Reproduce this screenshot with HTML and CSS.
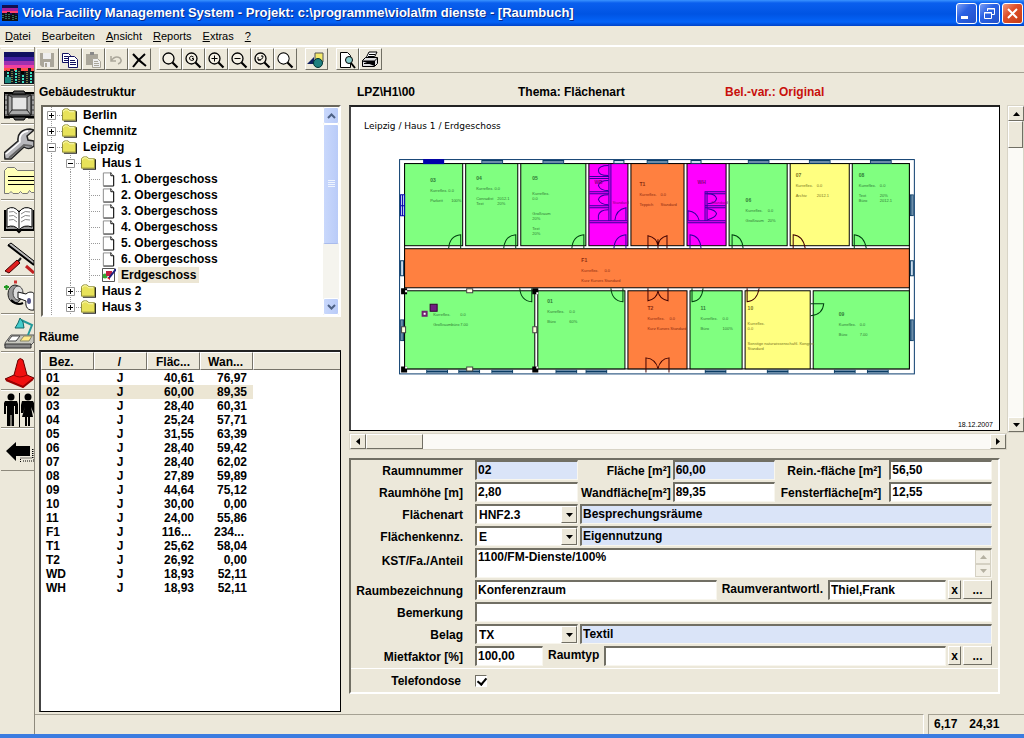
FILE: index.html
```html
<!DOCTYPE html>
<html lang="de">
<head>
  <meta charset="UTF-8">
  <meta name="viewport" content="width=device-width, initial-scale=1.0">
  <title>Viola Facility Management System</title>
  <link rel="stylesheet" href="styles.css">
</head>
<body>
  <svg class="defs" width="0" height="0" aria-hidden="true">
    <symbol id="folder" viewBox="0 0 16 14">
      <path d="M2 13.5h13.5V3" fill="none" stroke="#222" stroke-width="1.5"/>
      <path d="M.5 12.5v-10l2-2h4l2 2h6v10z" fill="#e8e25a" stroke="#8a8732"/>
      <path d="M1.5 4v-1l1.500-1.500h3l2 2h5" fill="none" stroke="#ffffc0"/>
    </symbol>
    <symbol id="page" viewBox="0 0 16 16">
      <path d="M2.500 15V1.500h8l3 3V15" fill="#fff" stroke="#888"/>
      <path d="M10.500 1v3.500h3V15.500h-11" fill="none" stroke="#000"/>
    </symbol>
    <symbol id="plus" viewBox="0 0 9 9">
      <path d="M.5.5h8v8h-8z" fill="#fff" stroke="#999"/>
      <path d="M2 4.500h5M4.500 2v5" stroke="#000"/>
    </symbol>
    <symbol id="minus" viewBox="0 0 9 9">
      <path d="M.5.5h8v8h-8z" fill="#fff" stroke="#999"/>
      <path d="M2 4.500h5" stroke="#000"/>
    </symbol>
    <symbol id="lens" viewBox="0 0 18 18">
      <circle cx="7.500" cy="7.500" r="5.500" fill="#f4f0e4" stroke="#000" stroke-width="1.300"/>
      <path d="M11.500 11.500l5 5" stroke="#000" stroke-width="2.200"/>
    </symbol>
    <symbol id="down" viewBox="0 0 7 4"><path d="M0 0h7L3.500 4z"/></symbol>
    <symbol id="up" viewBox="0 0 7 4"><path d="M0 4h7L3.500 0z"/></symbol>
    <!-- windows of the floor plan -->
    <symbol id="win-h" viewBox="0 0 22 4"><path d="M.5.5h21v3h-21zM0 2h22" fill="#cde" stroke="#0a3c64"/></symbol>
    <symbol id="win-v" viewBox="0 0 4 22"><path d="M.5.5h3v21h-3zM2 0v22" fill="#cde" stroke="#0a3c64"/></symbol>
  </svg>

  <header class="titlebar">
    <svg class="app-icon" width="16" height="16" viewBox="0 0 16 16">
      <path d="M0 0h16v16H0z" fill="#101050"/><path d="M0 3h16v3H0z" fill="#a020a0"/><path d="M0 6h16v2H0z" fill="#ff4070"/>
      <path d="M0 8h3v1h2v-2h3v3h2V8h3v2h3v6H0z" fill="#111"/><path d="M1 10v4M4 9v5M7 9v6M11 10v5M14 11v4" stroke="#4fd0a0" stroke-dasharray="1 1"/>
    </svg>
    <h1>Viola Facility Management System - Projekt: c:\programme\viola\fm dienste - [Raumbuch]</h1>
    <div class="window-buttons">
      <button aria-label="Minimieren"><svg width="19" height="19"><path d="M4 13.500h7" stroke="#fff" stroke-width="3"/></svg></button>
      <button aria-label="Wiederherstellen"><svg width="19" height="19" fill="none" stroke="#fff"><path d="M7.500 7V4.500h7v6h-2.500M7 5h8" /><path d="M4.500 8.500h7v6h-7zM4 9h8"/></svg></button>
      <button class="close" aria-label="Schließen"><svg width="19" height="19"><path d="M5 5l9 9M14 5l-9 9" stroke="#fff" stroke-width="2"/></svg></button>
    </div>
  </header>

  <nav class="menu">
    <button><u>D</u>atei</button>
    <button><u>B</u>earbeiten</button>
    <button><u>A</u>nsicht</button>
    <button><u>R</u>eports</button>
    <button><u>E</u>xtras</button>
    <button><u>?</u></button>
  </nav>

  <div class="workspace">
    <nav class="sidebar">
      <button aria-label="Liegenschaft"><svg width="30" height="32" viewBox="0 0 30 32">
        <path d="M0 0h30v32H0z" fill="#000"/><path d="M0 0h30v5H0z" fill="#101060"/><path d="M0 5h30v5H0z" fill="#4020a0"/><path d="M0 9h30v4H0z" fill="#a030b0"/><path d="M0 13h30v3H0z" fill="#f040a0"/><path d="M0 16h30v3H0z" fill="#ff5048"/>
        <path d="M0 20l3-2v4h3v-5h4v3h3v-4h4v6h3v-3h4v-3h3v5h3v11H0z" fill="#101820"/>
        <path d="M4 20v11M12 18v13M19 23v8M27 20v11" stroke="#40e0c0" stroke-width="2" stroke-dasharray="2 1"/><path d="M8 19v11M15 19v12M23 20v11" stroke="#d8d860" stroke-dasharray="1 1"/>
        <path d="M1 25h6v6H1z" fill="#18857b"/></svg></button>
      <button aria-label="Gebäude"><svg width="30" height="32" viewBox="0 0 30 32">
        <path d="M0 3h31v24H0z" fill="#666" stroke="#000" stroke-width="2"/><path d="M4 5h23v20H4z" fill="#aaa" stroke="#000"/><path d="M8 7h15v13H8z" fill="#e6e6e6" stroke="#222"/><path d="M4 5l4 2M27 5l-4 2M4 25l4-5M27 25l-4-5" stroke="#222"/>
        <path d="M10 1h10l2 3H8zM9 27h13l-2 3H11zM0 28h6M24 28h6" fill="#555" stroke="#000"/><path d="M2 6v18M29 6v18" stroke="#ccc" stroke-dasharray="3 2"/></svg></button>
      <button aria-label="Technik"><svg width="30" height="32" viewBox="0 0 30 32">
        <path d="M0 25l14-12c-1-7 4-12 12-12l4 1-7 6 1 4 6 1v5c-3 3-7 3-10 1L7 31H1z" fill="#b8b8bc" stroke="#222" stroke-width="1.500"/><path d="M2 26l14-12c-1-6 2-10 8-11" fill="none" stroke="#fff" stroke-width="1.500"/><path d="M5 30l15-13 8 1" fill="none" stroke="#666" stroke-width="2"/></svg></button>
      <button aria-label="Listen"><svg width="30" height="32" viewBox="0 0 30 32">
        <path d="M.5 27.500v-23l3-3h7l3 3h17v22h-3l-2-2-2 3h-5l-2-2-2 2H9l-2-2-2 2z" fill="#ffffb8" stroke="#777"/><path d="M4 10.500h26M4 14.500h26M4 18.500h26" stroke="#000"/></svg></button>
      <button aria-label="Raumbuch"><svg width="30" height="32" viewBox="0 0 30 32">
        <path d="M1 6v20h12l2 2 2-2h13V6" fill="#999" stroke="#000" stroke-width="2"/><path d="M3 5q7-4 12 3 5-7 13-3v18q-8-3-13 3-5-6-12-3z" fill="#fff" stroke="#000"/><path d="M15 8v17" stroke="#000"/><path d="M5 8q5-2 8 2M5 12q5-2 8 2M5 16q5-2 8 2M17 10q4-4 9-2M17 14q4-4 9-2M17 18q4-4 9-2" fill="none" stroke="#888"/></svg></button>
      <button aria-label="Reinigung"><svg width="30" height="32" viewBox="0 0 30 32">
        <path d="M4 3l3-2 23 18v4z" fill="#bbb" stroke="#000"/><path d="M4 3l26 20" stroke="#000" stroke-width="2"/><path d="M17 16l-5 6" stroke="#222" stroke-width="2"/><path d="M13 18l3 3-11 10-4-2z" fill="#e02020" stroke="#400"/><path d="M22 24l8 7" stroke="#c02020" stroke-width="3"/></svg></button>
      <button aria-label="Schlüssel"><svg width="30" height="32" viewBox="0 0 30 32">
        <path d="M10 2h3" stroke="#c33" stroke-width="3"/><path d="M0 7h5M2.500 5v5" stroke="#292" stroke-width="2"/>
        <ellipse cx="11" cy="14" rx="7" ry="9" fill="#999" stroke="#222"/><ellipse cx="14" cy="13" rx="5" ry="7" fill="#ddd" stroke="#444"/><path d="M14 12l8 2c3-3 8-2 8 0v16c-6 1-9-3-8-9l-8-3z" fill="#fff" stroke="#111"/><ellipse cx="25" cy="21" rx="2" ry="3" fill="#558"/><path d="M7 20q6 6 12 3" fill="none" stroke="#000" stroke-width="2"/></svg></button>
      <button aria-label="Arbeitsplatz"><svg width="30" height="32" viewBox="0 0 30 32">
        <path d="M1 25l6-8h23v7l-4 4H1z" fill="#c8c8c0" stroke="#555"/><path d="M4 23l4-5h8l-4 5z" fill="#fff" stroke="#444"/><path d="M16 23l4-5h8l-3 5z" fill="#ffe98a" stroke="#886"/><path d="M1 26h26v4H1z" fill="#888" stroke="#333"/>
        <path d="M17 2l11 5-4 10" fill="none" stroke="#299" stroke-width="2"/><path d="M16 0l3 4 1 6h-9l3-5z" fill="#4cc" stroke="#166"/></svg></button>
      <button aria-label="Sicherheit"><svg width="30" height="32" viewBox="0 0 30 32">
        <path d="M1 23l9-4 4-15q2-3 5 0l4 15 7 3-11 9z" fill="#f01010" stroke="#600"/><path d="M10 19q5 4 13 0" fill="none" stroke="#900"/><path d="M2 24l17 7 10-8" fill="none" stroke="#900" stroke-width="2"/></svg></button>
      <button aria-label="Personen"><svg width="30" height="34" viewBox="0 0 30 34">
        <circle cx="7" cy="4" r="3.500"/><path d="M1 8h12l1 3v10h-3v-8h-1v20H7.500V22h-1v11H3V13H2v8H0V10z"/><path d="M15.500 0v34" stroke="#000"/><circle cx="24" cy="4" r="3.500"/><path d="M18 8h11l1 2v11l-3-7 2 10h-3v9h-2v-9h-1v9h-2v-9h-3l3-10-2 6h-2v-8z"/></svg></button>
      <button class="back" aria-label="Zurück"><svg width="30" height="24" viewBox="0 0 30 24">
        <path d="M2 10L12 1v4h14v10H12v5z"/><path d="M28.500 8v9h-12v4M30 8v12h-12" fill="none" stroke="#000" stroke-dasharray="1 1"/></svg></button>
    </nav>

    <div class="client">
      <div class="toolbar">
        <div class="tool-group">
          <button aria-label="Speichern" disabled><svg width="18" height="18"><path d="M2 2h14v14H4l-2-2z" fill="#aaa69a"/><path d="M5 2h8v6H5zM6 11h6v5H6z" fill="#eee"/><path d="M7 12h2v4H7z" fill="#aaa69a"/></svg></button>
          <button aria-label="Kopieren"><svg width="18" height="18" fill="#fff" stroke="#101060"><path d="M1.500 2.500h6l2 2v7h-8z"/><path d="M3 5.500h4M3 7.500h4M3 9.500h4"/><path d="M7.500 5.500h6l3 3v8h-9z"/><path d="M9 9.500h5M9 11.500h6M9 13.500h6"/></svg></button>
          <button aria-label="Einfügen" disabled><svg width="18" height="18"><path d="M2 3h12v11H2z" fill="#aaa69a"/><path d="M6 1h4v3H6z" fill="#888"/><path d="M8.500 7.500h5l3 3v6h-8zM10 10.500h4M10 12.500h5M10 14.500h5" fill="#eee" stroke="#aaa69a"/></svg></button>
          <button aria-label="Rückgängig" disabled><svg width="18" height="18"><path d="M4 5v5h5M4 10q4-6 9-3 3 4-2 6" fill="none" stroke="#aaa69a" stroke-width="1.500"/></svg></button>
          <button aria-label="Löschen"><svg width="18" height="18"><path d="M3 3q5 6 13 12M15 3Q8 9 3 16" fill="none" stroke="#000" stroke-width="2"/></svg></button>
        </div>
        <div class="tool-group">
          <button aria-label="Zoom"><svg width="18" height="18"><use href="#lens"/></svg></button>
          <button aria-label="Zoom Gesamt"><svg width="18" height="18"><use href="#lens"/><path d="M9.500 6Q7 4 5.500 6.500q0 4 4 2.500V7.500H8" fill="none" stroke="#000"/></svg></button>
          <button aria-label="Vergrößern"><svg width="18" height="18"><use href="#lens"/><path d="M4.500 7.500h6M7.500 4.500v6" stroke="#000"/></svg></button>
          <button aria-label="Verkleinern"><svg width="18" height="18"><use href="#lens"/><path d="M4.500 7.500h6" stroke="#000"/></svg></button>
          <button aria-label="Zoom zurück"><svg width="18" height="18"><use href="#lens"/><path d="M5 6v3h3M5 9q5 0 5-4M8 5h2" fill="none" stroke="#000"/></svg></button>
          <button aria-label="Lupe"><svg width="18" height="18"><use href="#lens"/><circle cx="7.500" cy="7.500" r="5" fill="#fff"/></svg></button>
        </div>
        <div class="tool-group">
          <button aria-label="Thema"><svg width="18" height="18"><path d="M8 2h8v9H8z" fill="#f4e96a" stroke="#555"/><path d="M0 13l7-7v7z" fill="#102060"/><circle cx="11" cy="12" r="4.500" fill="#208080" stroke="#033"/></svg></button>
        </div>
        <div class="tool-group">
          <button aria-label="Seitenansicht"><svg width="18" height="18"><path d="M2.500 1.500h7l3 3v12h-10z" fill="#fff" stroke="#000"/><circle cx="11" cy="9" r="3.500" fill="#8cc" stroke="#000"/><path d="M13 12l4 5" stroke="#000" stroke-width="2"/></svg></button>
          <button aria-label="Drucken"><svg width="18" height="18" stroke="#000"><path d="M5 7l3-6h8l-3 6z" fill="#fff"/><path d="M8 3.500h6M7 5.500h6"/><path d="M1.500 9.500l3-3h12v6l-3 3h-12z" fill="#ddd"/><path d="M1 10h12.500v5M13.500 10l3-3M3 12.500h8"/></svg></button>
        </div>
      </div>

      <main class="content">
        <section class="left">
          <h2>Gebäudestruktur</h2>
          <div class="tree-box">
            <ul class="tree">
              <li><div class="node"><svg width="9" height="9"><use href="#plus"/></svg><svg width="15" height="14"><use href="#folder"/></svg><span>Berlin</span></div></li>
              <li><div class="node"><svg width="9" height="9"><use href="#plus"/></svg><svg width="15" height="14"><use href="#folder"/></svg><span>Chemnitz</span></div></li>
              <li><div class="node"><svg width="9" height="9"><use href="#minus"/></svg><svg width="15" height="14"><use href="#folder"/></svg><span>Leipzig</span></div>
                <ul>
                  <li><div class="node"><svg width="9" height="9"><use href="#minus"/></svg><svg width="15" height="14"><use href="#folder"/></svg><span>Haus 1</span></div>
                    <ul>
                      <li><div class="node leaf"><svg width="15" height="16"><use href="#page"/></svg><span>1. Obergeschoss</span></div></li>
                      <li><div class="node leaf"><svg width="15" height="16"><use href="#page"/></svg><span>2. Obergeschoss</span></div></li>
                      <li><div class="node leaf"><svg width="15" height="16"><use href="#page"/></svg><span>3. Obergeschoss</span></div></li>
                      <li><div class="node leaf"><svg width="15" height="16"><use href="#page"/></svg><span>4. Obergeschoss</span></div></li>
                      <li><div class="node leaf"><svg width="15" height="16"><use href="#page"/></svg><span>5. Obergeschoss</span></div></li>
                      <li><div class="node leaf"><svg width="15" height="16"><use href="#page"/></svg><span>6. Obergeschoss</span></div></li>
                      <li><div class="node leaf selected"><svg width="15" height="16"><path d="M1.500 1.500h12v13h-12z" fill="#fff" stroke="#555"/><circle cx="4" cy="9" r="2.500" fill="#3a3"/><path d="M5 4h6v5H5z" fill="#c02040"/><path d="M6 11l3-2v4z" fill="#e22"/><path d="M15 2l-7 9" stroke="#202080" stroke-width="2"/></svg><span>Erdgeschoss</span></div></li>
                    </ul>
                  </li>
                  <li><div class="node"><svg width="9" height="9"><use href="#plus"/></svg><svg width="15" height="14"><use href="#folder"/></svg><span>Haus 2</span></div></li>
                  <li><div class="node"><svg width="9" height="9"><use href="#plus"/></svg><svg width="15" height="14"><use href="#folder"/></svg><span>Haus 3</span></div></li>
                </ul>
              </li>
            </ul>
            <div class="xp-scroll">
              <button aria-label="Nach oben"><svg width="9" height="6"><path d="M1 5l3.500-3.500L8 5" fill="none" stroke="#4d6185" stroke-width="2"/></svg></button>
              <div class="xp-thumb"><svg width="7" height="8"><path d="M0 .5h7M0 2.500h7M0 4.500h7M0 6.500h7" stroke="#eef4fe"/></svg></div>
              <button class="last" aria-label="Nach unten"><svg width="9" height="6"><path d="M1 1l3.500 3.500L8 1" fill="none" stroke="#4d6185" stroke-width="2"/></svg></button>
            </div>
          </div>

          <h2 class="rooms-title">Räume</h2>
          <div class="rooms-box">
            <table class="rooms">
              <colgroup><col class="c1"><col class="c2"><col class="c2"><col class="c2"><col></colgroup>
              <thead><tr><th>Bez.</th><th>/</th><th>Fläc...</th><th>Wan...</th><th></th></tr></thead>
              <tbody>
                <tr><td>01</td><td>J</td><td>40,61</td><td>76,97</td></tr>
                <tr class="selected"><td>02</td><td>J</td><td>60,00</td><td>89,35</td></tr>
                <tr><td>03</td><td>J</td><td>28,40</td><td>60,31</td></tr>
                <tr><td>04</td><td>J</td><td>25,24</td><td>57,71</td></tr>
                <tr><td>05</td><td>J</td><td>31,55</td><td>63,39</td></tr>
                <tr><td>06</td><td>J</td><td>28,40</td><td>59,42</td></tr>
                <tr><td>07</td><td>J</td><td>28,40</td><td>62,02</td></tr>
                <tr><td>08</td><td>J</td><td>27,89</td><td>59,89</td></tr>
                <tr><td>09</td><td>J</td><td>44,64</td><td>75,12</td></tr>
                <tr><td>10</td><td>J</td><td>30,00</td><td>0,00</td></tr>
                <tr><td>11</td><td>J</td><td>24,00</td><td>55,86</td></tr>
                <tr><td>F1</td><td>J</td><td class="cut">116...</td><td class="cut">234...</td></tr>
                <tr><td>T1</td><td>J</td><td>25,62</td><td>58,04</td></tr>
                <tr><td>T2</td><td>J</td><td>26,92</td><td>0,00</td></tr>
                <tr><td>WD</td><td>J</td><td>18,93</td><td>52,11</td></tr>
                <tr><td>WH</td><td>J</td><td>18,93</td><td>52,11</td></tr>
              </tbody>
            </table>
          </div>
        </section>

        <section class="right">
          <div class="headline">
            <span>LPZ\H1\00</span>
            <span>Thema: Flächenart</span>
            <span class="variant">Bel.-var.: Original</span>
          </div>

          <div class="viewer">
            <div class="canvas">
              <svg class="plan" viewBox="352 108 647 323">
                <text x="365" y="130" class="plan-title">Leipzig / Haus 1 / Erdgeschoss</text>
                <text x="993" y="428" class="plan-date">18.12.2007</text>
                <rect x="400.500" y="160.500" width="514" height="214" fill="#fff" stroke="#0a3c6e"/>
                <rect x="405.500" y="164.500" width="504" height="205" fill="#fff" stroke="#000"/>
                <!-- rooms, upper row -->
                <g stroke="#000" fill="#80ff80">
                  <rect x="405.500" y="164.500" width="58" height="82"/>
                  <rect x="466.500" y="164.500" width="52" height="82"/>
                  <rect x="521.500" y="164.500" width="65" height="82"/>
                  <rect x="589.500" y="164.500" width="39" height="82" fill="#f0f"/>
                  <rect x="631.500" y="164.500" width="53" height="82" fill="#ff8040"/>
                  <rect x="687.500" y="164.500" width="39" height="82" fill="#f0f"/>
                  <rect x="729.500" y="164.500" width="58" height="82"/>
                  <rect x="790.500" y="164.500" width="59" height="82" fill="#ffff80"/>
                  <rect x="852.500" y="164.500" width="57" height="82"/>
                  <!-- corridor -->
                  <rect x="405.500" y="249.500" width="504" height="39" fill="#ff8040"/>
                  <!-- rooms, lower row -->
                  <rect x="405.500" y="291.500" width="130" height="78"/>
                  <rect x="538.500" y="291.500" width="87" height="78"/>
                  <rect x="628.500" y="291.500" width="59" height="78" fill="#ff8040"/>
                  <rect x="690.500" y="291.500" width="52" height="78"/>
                  <rect x="745.500" y="291.500" width="65" height="78" fill="#ffff80"/>
                  <rect x="813.500" y="291.500" width="96" height="78"/>
                </g>
                <rect x="424" y="160" width="21" height="5" fill="#00a"/>
                <g>
                  <use href="#win-h" x="482" y="161" width="22" height="4"/><use href="#win-h" x="543" y="161" width="22" height="4"/>
                  <use href="#win-h" x="647" y="161" width="22" height="4"/><use href="#win-h" x="748" y="161" width="22" height="4"/>
                  <use href="#win-h" x="809" y="161" width="22" height="4"/><use href="#win-h" x="870" y="161" width="22" height="4"/>
                  <use href="#win-h" x="427" y="370" width="22" height="4"/><use href="#win-h" x="459" y="370" width="22" height="4"/>
                  <use href="#win-h" x="492" y="370" width="22" height="4"/><use href="#win-h" x="556" y="370" width="22" height="4"/>
                  <use href="#win-h" x="586" y="370" width="22" height="4"/><use href="#win-h" x="705" y="370" width="22" height="4"/>
                  <use href="#win-h" x="767" y="370" width="22" height="4"/><use href="#win-h" x="834" y="370" width="22" height="4"/>
                  <use href="#win-h" x="867" y="370" width="22" height="4"/>
                  <use href="#win-v" x="401" y="320" width="4" height="22"/><use href="#win-v" x="910" y="195" width="4" height="22"/>
                  <use href="#win-v" x="910" y="320" width="4" height="22"/>
                  <path d="M614.500 161.500h10v3h-10zM691.500 161.500h10v3h-10z" fill="#cde" stroke="#0a3c64"/>
                  <path d="M401.500 261.500h3v15h-3zM910.500 261.500h3v15h-3z" fill="#cde" stroke="#0a3c64"/>
                  <path d="M401.500 195.500h4v21h-4zM403.500 195v21M401 206.500h5" fill="#cde" stroke="#00a"/>
                </g>
                <!-- doors -->
                <g fill="none" stroke="#004010">
                  <path d="M461.500 249v-13.500q-11 1-12 13.500M516.500 249v-13.500q-11 1-12 13.500M584.500 249v-13.500q-11 1-12 13.500"/>
                  <path d="M732.500 249v-13.500q10 1 11 13.500M854.500 249v-13.500q10 1 12 13.500"/>
                  <path d="M532.500 289v13.500q-11-1-12-13.500M623.500 289v13.500q-11-1-12-13.500M692.500 289v13.500q10-1 11-13.500"/>
                  <path d="M811 304.500h13q-1 11-13 12"/>
                </g>
                <g fill="none" stroke="#400000">
                  <path d="M648.500 249v-12.500q9 2 10 10 1-8 9-10V249M658.500 240v9"/>
                  <path d="M648.500 289v12.500q9-2 10-10 1 8 10 10V289"/>
                  <path d="M646.500 373v-14.500q10 1 12 11 2-10 11-11V373"/>
                  <path d="M793.500 249v-13.500q10 1 12 13.500M747.500 289v13.500q10-1 12-13.500"/>
                </g>
                <g fill="none" stroke="#3000a0">
                  <path d="M609.500 165v56M611.500 165v56M590 177.500h20M590 179.500h20M590 192.500h20M590 194.500h20M590 206.500h20M590 208.500h20M590 221.500h38M590 223.500h38"/>
                  <path d="M609 166.500q-10 0-10 5t10 5M609 181.500q-9 0-10 5 2 5 10 5M609 195.500q-9 0-10 5 2 5 10 5M609 210.500q-9 0-10 6v4"/>
                  <path d="M626.500 221v-12.500q-10 2-11 12.500M626.500 249v-13.500q-11 1-12 13.500"/>
                  <path d="M705.500 192v29M707.500 192v29M705 192.500h21M705 194.500h21M705 206.500h21M705 208.500h21M688 221.500h38M688 223.500h38"/>
                  <path d="M708 204.500q8 0 9-5-1-5-9-5M708 220.500q8-2 9-6-1-4-9-5M688.500 221v-9.500q9 1 11 9.500M690.500 249v-13.500q10 1 11 13.500"/>
                </g>
                <!-- room stamps -->
                <g class="stamp">
                  <text x="431" y="183" class="no">03</text><text x="431" y="193">Kurreflex. 0.0</text><text x="431" y="203">Parkett</text><text x="452" y="203">100%</text>
                  <text x="477" y="181" class="no">04</text><text x="477" y="191">Kurreflex. 0.0</text><text x="477" y="201">Conradist</text><text x="498" y="201">2012.1</text><text x="477" y="206">Text</text><text x="498" y="206">20%</text>
                  <text x="533" y="181" class="no">05</text><text x="533" y="196">Kurreflex.</text><text x="533" y="201">0.0</text><text x="533" y="216">Großraum</text><text x="533" y="221">20%</text><text x="533" y="231">Text</text><text x="533" y="236">20%</text>
                  <text x="746" y="203" class="no">06</text><text x="746" y="213">Kurreflex.</text><text x="768" y="213">0.0</text><text x="746" y="223">Großraum</text><text x="768" y="223">20%</text>
                  <text x="859" y="178" class="no">08</text><text x="859" y="188">Kurreflex.</text><text x="880" y="188">0.0</text><text x="859" y="198">Text</text><text x="880" y="198">20%</text><text x="859" y="203">Büro</text><text x="880" y="203">2012.1</text>
                  <text x="434" y="317">Kurreflex.</text><text x="461" y="317">0.0</text><text x="434" y="327">Großraumbüro</text><text x="461" y="327">7.00</text>
                  <text x="548" y="304" class="no">01</text><text x="548" y="314">Kurreflex.</text><text x="570" y="314">0.0</text><text x="548" y="324">Büro</text><text x="570" y="324">60%</text>
                  <text x="701" y="311" class="no">11</text><text x="701" y="321">Kurreflex.</text><text x="723" y="321">0.0</text><text x="701" y="331">Büro</text><text x="723" y="331">100%</text>
                  <text x="839" y="317" class="no">09</text><text x="839" y="327">Kurreflex.</text><text x="860" y="327">0.0</text><text x="839" y="337">Büro</text><text x="860" y="337">7.00</text>
                </g>
                <g class="stamp red">
                  <text x="640" y="187" class="no">T1</text><text x="640" y="197">Kurreflex.</text><text x="661" y="197">0.0</text><text x="640" y="207">Teppich</text><text x="661" y="207">Standard</text>
                  <text x="582" y="263" class="no">F1</text><text x="582" y="273">Kurreflex.</text><text x="605" y="273">0.0</text><text x="582" y="283">Kurz Kurves Standard</text>
                  <text x="648" y="311" class="no">T2</text><text x="648" y="321">Kurreflex.</text><text x="670" y="321">0.0</text><text x="648" y="331">Kurz Kurves Standard</text>
                </g>
                <g class="stamp violet">
                  <text x="595" y="185" class="no">WD</text><text x="613" y="205">Standard</text>
                  <text x="698" y="185" class="no">WH</text><text x="712" y="205">Standard</text>
                </g>
                <g class="stamp olive">
                  <text x="796" y="178" class="no">07</text><text x="796" y="188">Kurreflex.</text><text x="817" y="188">0.0</text><text x="796" y="198">Archiv</text><text x="817" y="198">2012.1</text>
                  <text x="748" y="311" class="no">10</text><text x="748" y="326">Kurreflex.</text><text x="748" y="331">0.0</text><text x="748" y="346">Sonstige naturwissenschaftl. Kongres</text><text x="748" y="351">Standard</text>
                </g>
                <!-- selection handles of room 02 -->
                <path d="M402 289h6v6h-6zM533 289h6v6h-6zM402 367h6v6h-6zM533 367h6v6h-6z"/>
                <path d="M406 291h2v2h-2zM537 293h2v2h-2zM406 367h2v2h-2zM537 367h2v2h-2z" fill="#fff"/>
                <g fill="#ffd" stroke="#444"><path d="M467.500 289.500h6v4h-6zM467.500 367.500h6v4h-6zM402.500 327.500h4v6h-4zM533.500 327.500h4v6h-4z"/></g>
                <path d="M431 305h7v7h-7z" fill="#702080" stroke="#303"/><path d="M423.500 312.500h4v4h-4z" fill="#fff" stroke="#702070" stroke-width="2"/>
              </svg>
            </div>
            <div class="scroll vertical">
              <button aria-label="Bild nach oben"><svg width="7" height="4"><use href="#up"/></svg></button>
              <div class="thumb"></div>
              <button class="last" aria-label="Bild nach unten"><svg width="7" height="4"><use href="#down"/></svg></button>
            </div>
            <div class="scroll horizontal">
              <button aria-label="Bild nach links"><svg width="4" height="7"><path d="M4 0v7L0 3.500z"/></svg></button>
              <div class="thumb"></div>
              <button class="last" aria-label="Bild nach rechts"><svg width="4" height="7"><path d="M0 0v7l4-3.500z"/></svg></button>
            </div>
          </div>

          <form class="room-form">
            <div class="row">
              <label for="raumnummer">Raumnummer</label>
              <div class="fields triple">
                <input id="raumnummer" class="calc" value="02">
                <label for="flaeche">Fläche [m²]</label>
                <input id="flaeche" class="calc" value="60,00">
                <label for="reinflaeche">Rein.-fläche [m²]</label>
                <input id="reinflaeche" value="56,50">
              </div>
            </div>
            <div class="row">
              <label for="raumhoehe">Raumhöhe [m]</label>
              <div class="fields triple">
                <input id="raumhoehe" value="2,80">
                <label for="wandflaeche">Wandfläche[m²]</label>
                <input id="wandflaeche" value="89,35">
                <label for="fensterflaeche">Fensterfläche[m²]</label>
                <input id="fensterflaeche" value="12,55">
              </div>
            </div>
            <div class="row">
              <label for="flaechenart">Flächenart</label>
              <div class="fields">
                <div class="combo"><select id="flaechenart"><option>HNF2.3</option></select><span class="drop"><svg width="7" height="4"><use href="#down"/></svg></span></div>
                <input class="calc grow" aria-label="Flächenart Text" value="Besprechungsräume">
              </div>
            </div>
            <div class="row">
              <label for="kennz">Flächenkennz.</label>
              <div class="fields">
                <div class="combo"><select id="kennz"><option>E</option></select><span class="drop"><svg width="7" height="4"><use href="#down"/></svg></span></div>
                <input class="calc grow" aria-label="Flächenkennz. Text" value="Eigennutzung">
              </div>
            </div>
            <div class="row tall">
              <label for="kst">KST/Fa./Anteil</label>
              <div class="fields memo">
                <textarea id="kst">1100/FM-Dienste/100%</textarea>
                <div class="memo-scroll">
                  <button type="button" aria-label="Zeile hoch" disabled><svg width="7" height="4" fill="#b5b1a2"><use href="#up"/></svg></button>
                  <button type="button" aria-label="Zeile runter" disabled><svg width="7" height="4" fill="#b5b1a2"><use href="#down"/></svg></button>
                </div>
              </div>
            </div>
            <div class="row">
              <label for="bezeichnung">Raumbezeichnung</label>
              <div class="fields">
                <input id="bezeichnung" class="grow" value="Konferenzraum">
                <label for="verantwortl" class="mid">Raumverantwortl.</label>
                <input id="verantwortl" class="person" value="Thiel,Frank">
                <button type="button" class="clear">x</button>
                <button type="button" class="pick">...</button>
              </div>
            </div>
            <div class="row">
              <label for="bemerkung">Bemerkung</label>
              <div class="fields"><input id="bemerkung" class="grow" value=""></div>
            </div>
            <div class="row">
              <label for="belag">Belag</label>
              <div class="fields">
                <div class="combo"><select id="belag"><option>TX</option></select><span class="drop"><svg width="7" height="4"><use href="#down"/></svg></span></div>
                <input class="calc grow" aria-label="Belag Text" value="Textil">
              </div>
            </div>
            <div class="row">
              <label for="mietfaktor">Mietfaktor [%]</label>
              <div class="fields">
                <input id="mietfaktor" class="short" value="100,00">
                <label for="raumtyp" class="mid">Raumtyp</label>
                <input id="raumtyp" class="grow" value="">
                <button type="button" class="clear">x</button>
                <button type="button" class="pick">...</button>
              </div>
            </div>
            <div class="row check-row">
              <label for="telefondose">Telefondose</label>
              <input type="checkbox" id="telefondose" checked>
            </div>
          </form>
        </section>
      </main>

      <footer class="statusbar">
        <div class="status-main"></div>
        <div class="status-pos"><span>6,17</span><span>24,31</span></div>
      </footer>
    </div>
  </div>
</body>
</html>
```

FILE: styles.css
```css
* {
  box-sizing: border-box;
}
body {
  margin: 0;
  min-height: 100vh;
  display: flex;
  flex-direction: column;
  background: #ece8da;
  border-bottom: 4px solid #3b7ce0;
  font: bold 12px/16px "Liberation Sans", Arial, sans-serif;
  color: #000;
}
.defs {
  position: absolute;
}
button, input, select, textarea {
  font: inherit;
  color: inherit;
  margin: 0;
  padding: 0;
  border-radius: 0;
}
svg {
  display: block;
  flex: none;
}
h1, h2 {
  margin: 0;
  font-size: 12px;
}

/* title bar */
.titlebar {
  height: 26px;
  display: flex;
  align-items: center;
  gap: 4px;
  padding: 0 1px 0 2px;
  background: linear-gradient(#3a93ff 0, #0a5fee 3px, #0054e3 14px, #0464f8 22px, #0043c8 26px);
}
.titlebar h1 {
  flex: 1;
  font: bold 13px/20px "Liberation Sans", Arial, sans-serif;
  color: #fff;
  text-shadow: 1px 1px #0a2a88;
  white-space: nowrap;
}
.window-buttons {
  display: flex;
  gap: 2px;
}
.window-buttons button {
  width: 21px;
  height: 21px;
  border: 1px solid #fff;
  border-radius: 3px;
  background: linear-gradient(135deg, #7c9ff5, #2a62e4 40%, #2350c8);
}
.window-buttons .close {
  background: linear-gradient(135deg, #f09a80, #e0502a 40%, #c43c14);
}

/* menu */
.menu {
  height: 21px;
  display: flex;
  border-bottom: 2px solid #fff;
}
.menu button {
  padding: 0 6px 0 5px;
  border: 0;
  background: none;
  font-weight: normal;
  font-size: 11px;
}

.workspace {
  flex: 1;
  display: flex;
}
.sidebar {
  width: 35px;
  border-right: 1px solid #8d897c;
  padding: 1px 0 0 1px;
}
.sidebar button {
  display: flex;
  align-items: center;
  width: 33px;
  height: 38px;
  padding: 2px 0 0 3px;
  border: 0;
  border-top: 1px solid #fff;
  border-bottom: 1px solid #8d897c;
  background: none;
  overflow: hidden;
}
.sidebar .back {
  height: 43px;
  padding-top: 6px;
}
.client {
  flex: 1;
  min-width: 0;
  display: flex;
  flex-direction: column;
}

/* tool bar */
.toolbar {
  height: 26px;
  display: flex;
  gap: 8px;
  padding: 1px 0 0 1px;
  border-bottom: 1px solid #a5a193;
}
.tool-group {
  display: flex;
}
.toolbar button {
  width: 23px;
  height: 22px;
  padding: 1px 0 0 1px;
  border: 1px solid;
  border-color: #fff #716f64 #716f64 #fff;
  background: #ece8da;
}

.content {
  flex: 1;
  display: flex;
  gap: 8px;
  padding: 7px 0 2px 4px;
}
.left {
  width: 302px;
  display: flex;
  flex-direction: column;
}
.left h2, .headline {
  height: 25px;
  line-height: 24px;
}

/* building tree */
.tree-box {
  height: 212px;
  display: flex;
  margin-left: 2px;
  border: 2px solid;
  border-color: #6a675c #fff #fff #6a675c;
  background: #fff;
}
.tree {
  flex: 1;
  padding-left: 4px;
}
.tree, .tree ul {
  margin: 0;
  list-style: none;
}
.tree ul {
  margin-left: 4px;
  padding-left: 14px;
  border-left: 1px dotted #999;
}
.tree ul ul {
  padding-left: 18px;
}
.node {
  display: flex;
  align-items: center;
  height: 16px;
  background:
    repeating-linear-gradient(90deg, #999 0 1px, transparent 1px 2px) 4px 8px / 12px 1px no-repeat,
    repeating-linear-gradient(#999 0 1px, transparent 1px 2px) 4px 0 / 1px 16px no-repeat;
}
.node svg:first-child {
  margin-right: 6px;
}
.node svg:last-of-type {
  margin-right: 3px;
}
.node span {
  padding: 0 3px;
}
.leaf {
  padding-left: 12px;
  background-position: 0 8px, 0 0;
}
.leaf svg:first-child {
  margin-right: 2px;
}
.selected span, .rooms .selected td {
  background: #ece6d4;
}
.xp-scroll {
  width: 16px;
  display: flex;
  flex-direction: column;
  background: #f5f4ee;
}
.xp-scroll button, .xp-thumb {
  display: flex;
  align-items: center;
  justify-content: center;
  border: 1px solid #fff;
  border-radius: 2px;
  background: linear-gradient(90deg, #c9d8fc, #b9cbf8);
}
.xp-scroll button {
  height: 17px;
}
.xp-thumb {
  height: 120px;
  border-bottom-color: #a9bbec;
}
.xp-scroll .last {
  margin-top: auto;
}

/* room list */
.left .rooms-title {
  height: 33px;
  line-height: 40px;
}
.rooms-box {
  flex: 1;
  border: 1px solid #000;
  border-top: 2px solid #222;
  border-left: 2px solid #444;
  background: #fff;
}
.rooms {
  width: 100%;
  table-layout: fixed;
  border-collapse: separate;
  border-spacing: 0;
}
.c1, .c2 {
  width: 53px;
}
.rooms th {
  height: 18px;
  padding: 2px 9px 0 7px;
  border: 1px solid;
  border-color: #fff #77746a #77746a #fff;
  background: #ece8da;
  line-height: 14px;
  text-align: left;
}
.rooms th:last-child {
  border-right: 0;
}
.rooms td {
  height: 14px;
  padding: 0 6px 0 5px;
  line-height: 14px;
}
.rooms tbody tr:first-child td {
  height: 15px;
  padding-top: 1px;
}
.rooms th:nth-child(2), .rooms td:nth-child(2) {
  text-align: center;
}
.rooms th:nth-child(n+3), .rooms td:nth-child(n+3) {
  text-align: right;
}
.rooms .cut {
  padding-right: 9px;
}

/* right side */
.right {
  flex: 1;
  min-width: 0;
}
.headline {
  display: grid;
  grid-template-columns: 161px 207px 1fr;
  padding-left: 8px;
}
.variant {
  color: #c8100c;
}
.viewer {
  display: grid;
  grid-template-columns: 1fr 17px;
  grid-template-rows: auto 17px;
}
.canvas {
  margin: 0 7px 2px 0;
  border: 1px solid #000;
  border-top: 2px solid #222;
  border-left: 2px solid #444;
  background: #fff;
}
.plan {
  width: 100%;
}
.plan text {
  font-weight: normal;
}
.plan .plan-title {
  font-size: 9px;
  font-family: "DejaVu Sans", sans-serif;
}
.plan .plan-date {
  font-size: 7px;
  text-anchor: end;
}
.stamp text {
  font-size: 4px;
  fill: #2f7a35;
}
.plan .stamp .no {
  font-weight: bold;
  font-size: 5px;
}
.red text {
  fill: #8a2a10;
}
.violet text {
  fill: #8a0080;
}
.olive text {
  fill: #7a7420;
}
.scroll {
  display: flex;
  background: #fbfaf6;
  border: 1px solid #d8d4c6;
}
.vertical {
  flex-direction: column;
}
.scroll button, .scroll .thumb {
  display: flex;
  align-items: center;
  justify-content: center;
  border: 1px solid;
  border-color: #fff #716f64 #716f64 #fff;
  background: #ece8da;
}
.scroll button {
  width: 16px;
  height: 15px;
}
.vertical .thumb {
  height: 27px;
}
.horizontal .thumb {
  width: 57px;
}
.vertical .last {
  margin-top: auto;
}
.horizontal .last {
  margin-left: auto;
}

/* room form */
.room-form {
  display: flex;
  flex-direction: column;
  gap: 2px;
  margin: 8px 24px 0 0;
  border: 2px solid;
  border-color: #716f64 #fff #fff #716f64;
}
.row {
  display: flex;
  gap: 12px;
  padding-right: 6px;
}
.row > label {
  width: 112px;
  padding-top: 3px;
  text-align: right;
}
.fields {
  flex: 1;
  min-width: 0;
  display: flex;
  gap: 2px;
}
.triple {
  display: grid;
  grid-template-columns: 1fr 95px 1fr 114px 1fr;
  gap: 0;
}
.triple label {
  padding: 3px 2px 0 0;
  text-align: right;
  white-space: nowrap;
}
.triple label:nth-of-type(2) {
  padding-right: 8px;
}
.fields input, .combo, .memo {
  min-width: 0;
  height: 20px;
  border: 1px solid;
  border-color: #716f64 #f8f6ee #f8f6ee #716f64;
  border-top-width: 2px;
  border-left-width: 2px;
  background: #fff;
}
.fields input {
  padding: 0 1px 2px;
}
.triple input {
  width: 100%;
}
.fields .calc {
  background: #dae4f8;
}
.fields .grow {
  flex: 1;
}
.combo {
  position: relative;
  width: 103px;
}
.combo select {
  display: block;
  width: 100%;
  height: 17px;
  padding: 0 18px 0 2px;
  border: 0;
  background: none;
  appearance: none;
}
.drop {
  position: absolute;
  top: 0;
  right: 0;
  width: 16px;
  height: 17px;
  display: flex;
  align-items: center;
  justify-content: center;
  border: 1px solid;
  border-color: #fff #716f64 #716f64 #fff;
  background: #ece8da;
  pointer-events: none;
}
.tall > label {
  padding-top: 5px;
}
.memo {
  height: 30px;
  gap: 0;
}
.memo textarea {
  flex: 1;
  padding: 0 1px;
  border: 0;
  background: none;
  resize: none;
  overflow: hidden;
  line-height: 14px;
}
.memo-scroll {
  display: flex;
  flex-direction: column;
}
.memo-scroll button {
  width: 16px;
  flex: 1;
  display: flex;
  align-items: center;
  justify-content: center;
  border: 1px solid #d5d1c3;
  background: #f3f0e6;
}
.mid {
  padding: 0 3px;
  line-height: 18px;
}
.fields .person {
  width: 118px;
}
.fields .short {
  width: 68px;
}
.clear, .pick {
  height: 19px;
  border: 1px solid;
  border-color: #fff #716f64 #716f64 #fff;
  background: #ece8da;
  line-height: 14px;
}
.clear {
  width: 13px;
}
.pick {
  width: 29px;
}
.check-row {
  height: 24px;
  align-items: center;
  border-top: 1px solid #fff;
}
.check-row > label {
  padding: 0;
  width: 110px;
}
.check-row input {
  appearance: none;
  width: 12px;
  height: 12px;
  margin-left: 2px;
  border: 1px solid;
  border-color: #716f64 #fff #fff #716f64;
  background: #fff;
}
.check-row input:checked::before {
  content: "";
  display: block;
  width: 4px;
  height: 7px;
  margin: 0 0 0 3px;
  border: solid #000;
  border-width: 0 2px 2px 0;
  transform: rotate(40deg);
}

/* status bar */
.statusbar {
  height: 20px;
  display: flex;
  gap: 4px;
  line-height: 18px;
}
.status-main {
  flex: 1;
  border-top: 1px solid #a5a193;
  border-right: 1px solid #fff;
}
.status-pos {
  width: 96px;
  display: flex;
  gap: 12px;
  padding-left: 5px;
  border-top: 1px solid #a5a193;
  border-left: 1px solid #a5a193;
}
```
